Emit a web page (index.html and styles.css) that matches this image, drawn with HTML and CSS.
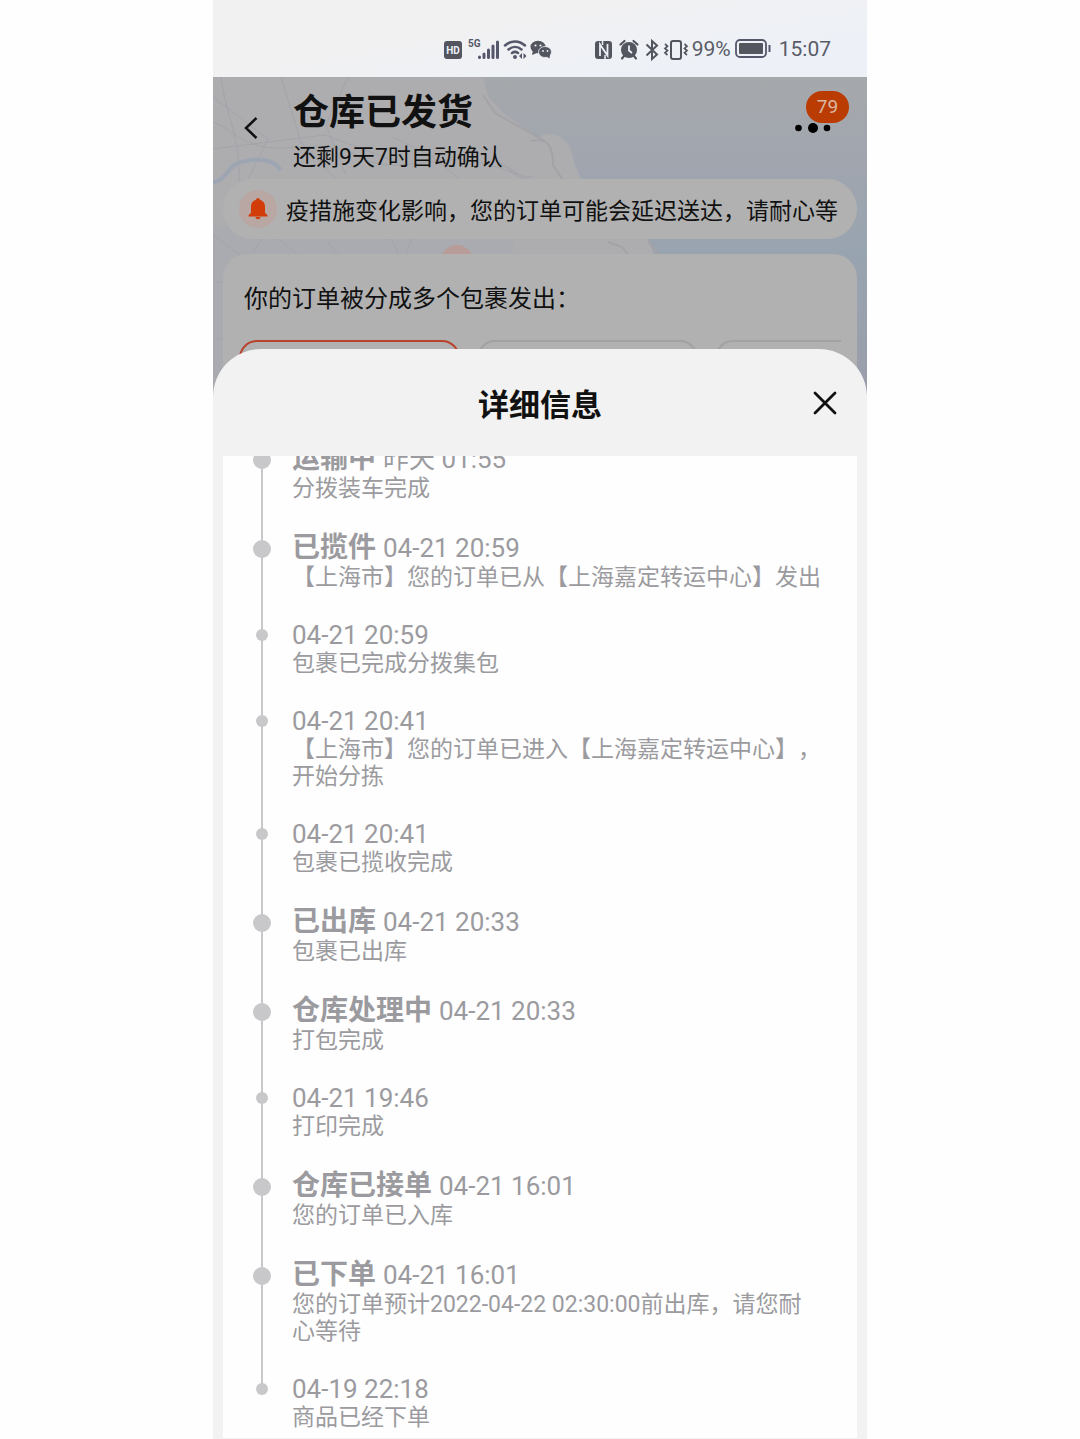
FILE: index.html
```
<!DOCTYPE html>
<html lang="zh-CN">
<head>
  <meta charset="UTF-8">
  <meta name="viewport" content="width=device-width, initial-scale=1.0">
  <title>仓库已发货</title>
  <link rel="stylesheet" href="styles.css">
</head>
<body>
  <div class="phone">
    <!-- Status bar -->
    <div class="status-bar">
      <svg class="status-left" width="110" height="26" viewBox="0 0 110 26" aria-hidden="true">
        <rect x="1" y="5" width="18" height="18" rx="3" fill="#53555f"/>
        <text x="10" y="18" class="hd-text">HD</text>
        <text x="25" y="11" class="net-text">5G</text>
        <g stroke="#55576a" stroke-width="3" stroke-linecap="round">
          <path d="M36.500 21v.5M41 18v3.500M45.500 14v7.500M50 10v11.500M54.500 6v15.500"/>
        </g>
        <g fill="none" stroke="#55576a" stroke-width="2.500" stroke-linecap="round">
          <path d="M62 9.500c6-5.500 14-5.500 20 0M65.500 13.500c4-3.500 9-3.500 13 0M69 17c2-1.500 4-1.500 6 0"/>
        </g>
        <circle cx="72" cy="21" r="2" fill="#55576a"/>
        <path d="M79 17v6l-3-3zM80.500 17v6l3-3z" fill="#55576a"/>
        <!-- chat bubbles -->
        <ellipse cx="95" cy="11" rx="7.500" ry="6.200" fill="#53555f"/>
        <path d="M90 14l-1 5 5-2z" fill="#53555f"/>
        <ellipse cx="102" cy="16" rx="6.500" ry="5.500" fill="#53555f" stroke="#edf0f7" stroke-width=".8"/>
        <path d="M103 20l3.500 2.500.5-4z" fill="#53555f"/>
        <circle cx="92.500" cy="9.500" r="1.100" fill="#edf0f7"/>
        <circle cx="97.500" cy="9.500" r="1.100" fill="#edf0f7"/>
        <circle cx="100" cy="15" r=".9" fill="#edf0f7"/>
        <circle cx="104.500" cy="15" r=".9" fill="#edf0f7"/>
      </svg>
      <svg class="status-right" width="96" height="26" viewBox="0 0 96 26" aria-hidden="true">
        <rect x="2" y="5" width="17" height="18" rx="3" fill="#53555f"/>
        <path d="M7 20V8.500l7.500 11V8" fill="none" stroke="#edf0f7" stroke-width="1.800"/>
        <path d="M9.500 5v4M12 19v4" stroke="#edf0f7" stroke-width="1.500"/>
        <circle cx="36" cy="14" r="8" fill="#53555f"/>
        <path d="M27.500 8.500l4-3.500M44.500 8.500l-4-3.500M31 20l-2 2.500M41 20l2 2.500" stroke="#53555f" stroke-width="2.200" stroke-linecap="round"/>
        <path d="M36 9.500v5l3 2.500" fill="none" stroke="#edf0f7" stroke-width="1.800"/>
        <path d="M53.500 8.500l10.500 10-5 4.500V5l5 4.500-10.500 10" fill="none" stroke="#53555f" stroke-width="2"/>
        <rect x="78" y="5" width="10" height="18" rx="2" fill="none" stroke="#53555f" stroke-width="2"/>
        <path d="M72 8l2.500 2.200-2.500 2.200 2.500 2.200-2.500 2.200 2.500 2.200M91.500 8l2.500 2.200-2.500 2.200 2.500 2.200-2.500 2.200 2.500 2.200" fill="none" stroke="#53555f" stroke-width="1.700"/>
      </svg>
      <span>99%</span>
      <svg class="battery" width="36" height="20" viewBox="0 0 36 20" aria-hidden="true">
        <rect x="1" y="1" width="30" height="17" rx="4" fill="none" stroke="#55576a" stroke-width="1.800"/>
        <rect x="4" y="4" width="24" height="11" rx="1" fill="#53555f"/>
        <path d="M34.500 6v7" stroke="#55576a" stroke-width="2"/>
      </svg>
      <span class="clock">15:07</span>
    </div>

    <!-- Order page behind the sheet -->
    <header class="order">
      <svg class="map" viewBox="0 0 654 318" preserveAspectRatio="none" aria-hidden="true">
        <defs>
          <linearGradient id="sea" x1="0" y1="0" x2="0" y2="1">
            <stop offset="0" stop-color="#a5a9ac"/>
            <stop offset=".25" stop-color="#a1a5ae"/>
            <stop offset=".55" stop-color="#98a4b0"/>
            <stop offset="1" stop-color="#9a9eaa"/>
          </linearGradient>
        </defs>
        <rect width="654" height="318" fill="url(#sea)"/>
        <path d="M0 0h270l5 20 15 16 35 24c16-8 33 0 36 26l8 18 66 58 10 26v130H0z" fill="#adadb0"/>
        <path d="M0 150h300v168H0z" fill="#a9abb1"/>
        <path d="M270 18l12 18 50 28M318 64c18-4 22 6 22 24l10 15M395 165l14 5 8 10M435 164l12 16" fill="none" stroke="#a4a2a6" stroke-width="2"/>
        <path d="M0 105c12 0 16-18 28-20 18-4 30-4 40 8" fill="none" stroke="#9da5b3" stroke-width="4"/>
        <g fill="none" stroke="#a2a4a9">
          <path d="M0 45c20 8 25 20 52 25s60-10 95 10 80-5 118 5 40 15 55 15M68 0l20 65 35 38M135 0l-22 48 20 50M0 20l55 42-20 40M180 60l40 20 30 25M8 0c5 40 20 60 18 105M0 72l112-14 70 26M318 105l-35-22 30 22"/>
          <path d="M0 158l30 22M40 175l15-22 30 25M115 165l12 15h60l-10-20M200 158l-8 22M0 205h10M0 262h10"/>
        </g>
        <circle cx="244" cy="184" r="16" fill="#b89c98"/>
      </svg>
      <nav class="nav">
        <button class="back" type="button" aria-label="返回">
          <svg width="16" height="26" viewBox="0 0 16 26"><path d="M13.500 3L3 13l10.500 10" fill="none" stroke="#111" stroke-width="2.500"/></svg>
        </button>
        <div class="nav-text">
          <h1>仓库已发货</h1>
          <p>还剩9天7时自动确认</p>
        </div>
        <button class="more" type="button" aria-label="更多">
          <svg width="36" height="12" viewBox="0 0 36 12"><circle cx="3.500" cy="6" r="3.300"/><circle cx="18" cy="6" r="5"/><circle cx="32" cy="6" r="3.300"/></svg>
          <span class="badge">79</span>
        </button>
      </nav>
      <div class="notice">
        <span class="bell">
          <svg width="20" height="22" viewBox="0 0 20 22" aria-hidden="true"><path d="M10 0c1 0 1.800.8 1.800 1.800 3.400.8 5.200 3.500 5.200 7v6l2.500 2.500v1.200H.5v-1.200L3 14.800v-6c0-3.500 1.800-6.200 5.200-7C8.200.8 9 0 10 0zM7.500 19h5c0 1.300-1.100 2.200-2.500 2.200s-2.500-.9-2.500-2.200z" fill="#d23c08"/></svg>
        </span>
        <p>疫措施变化影响，您的订单可能会延迟送达，请耐心等</p>
      </div>
      <section class="packages">
        <h2>你的订单被分成多个包裹发出：</h2>
        <div class="tabs">
          <button class="tab active" type="button" aria-label="包裹1"></button>
          <button class="tab" type="button" aria-label="包裹2"></button>
          <button class="tab" type="button" aria-label="包裹3"></button>
        </div>
      </section>
    </header>

    <!-- Detail sheet -->
    <main class="sheet">
      <div class="sheet-head">
        <h2>详细信息</h2>
        <button class="close" type="button" aria-label="关闭">
          <svg width="24" height="24" viewBox="0 0 24 24"><path d="M2 2l20 20M22 2L2 22" stroke="#111" stroke-width="2.800" stroke-linecap="round"/></svg>
        </button>
      </div>
      <div class="sheet-body">
        <ol class="timeline">
          <li class="step major">
            <span class="rail"></span>
            <div class="info">
              <h3>运输中 <time>昨天 01:55</time></h3>
              <p>分拨装车完成</p>
            </div>
          </li>
          <li class="step major">
            <span class="rail"></span>
            <div class="info">
              <h3>已揽件 <time>04-21 20:59</time></h3>
              <p>【上海市】您的订单已从【上海嘉定转运中心】发出</p>
            </div>
          </li>
          <li class="step">
            <span class="rail"></span>
            <div class="info">
              <h3><time>04-21 20:59</time></h3>
              <p>包裹已完成分拨集包</p>
            </div>
          </li>
          <li class="step">
            <span class="rail"></span>
            <div class="info">
              <h3><time>04-21 20:41</time></h3>
              <p>【上海市】您的订单已进入【上海嘉定转运中心】，开始分拣</p>
            </div>
          </li>
          <li class="step">
            <span class="rail"></span>
            <div class="info">
              <h3><time>04-21 20:41</time></h3>
              <p>包裹已揽收完成</p>
            </div>
          </li>
          <li class="step major">
            <span class="rail"></span>
            <div class="info">
              <h3>已出库 <time>04-21 20:33</time></h3>
              <p>包裹已出库</p>
            </div>
          </li>
          <li class="step major">
            <span class="rail"></span>
            <div class="info">
              <h3>仓库处理中 <time>04-21 20:33</time></h3>
              <p>打包完成</p>
            </div>
          </li>
          <li class="step">
            <span class="rail"></span>
            <div class="info">
              <h3><time>04-21 19:46</time></h3>
              <p>打印完成</p>
            </div>
          </li>
          <li class="step major">
            <span class="rail"></span>
            <div class="info">
              <h3>仓库已接单 <time>04-21 16:01</time></h3>
              <p>您的订单已入库</p>
            </div>
          </li>
          <li class="step major">
            <span class="rail"></span>
            <div class="info">
              <h3>已下单 <time>04-21 16:01</time></h3>
              <p>您的订单预计2022-04-22 02:30:00前出库，请您耐心等待</p>
            </div>
          </li>
          <li class="step">
            <span class="rail"></span>
            <div class="info">
              <h3><time>04-19 22:18</time></h3>
              <p>商品已经下单</p>
            </div>
          </li>
        </ol>
      </div>
    </main>
  </div>
</body>
</html>
```

FILE: styles.css
```
* {
  box-sizing: border-box;
}
body {
  margin: 0;
  background-color: #fefefe;
  font-family: Roboto, "Noto Sans CJK SC", sans-serif;
  color: #111;
}
h1, h2, h3, p, ol {
  margin: 0;
  padding: 0;
}
button {
  padding: 0;
  border: none;
  background: none;
  font: inherit;
  cursor: pointer;
}
svg {
  display: block;
}
.phone {
  max-width: 654px;
  margin: 0 auto;
  overflow: hidden;
}

/* status bar */
.status-bar {
  display: flex;
  align-items: center;
  justify-content: flex-end;
  height: 77px;
  padding: 20px 36px 0 0;
  background: linear-gradient(170deg, #f2f1f1 30%, #edf1f7 80%);
  color: #5a5c68;
  font-size: 21px;
}
.status-left {
  margin-right: 40px;
}
.status-right {
  margin-right: 3px;
}
.battery {
  margin: 0 8px 0 4px;
}
.hd-text {
  font-size: 10px;
  font-weight: bold;
  fill: #edf0f7;
  text-anchor: middle;
}
.net-text {
  font-size: 10px;
  font-weight: bold;
  fill: #55576a;
}

/* order page */
.order {
  position: relative;
  height: 318px;
  overflow: hidden;
  padding: 0 10px;
}
.map {
  position: absolute;
  top: 0;
  left: 0;
  width: 100%;
  height: 100%;
}
.nav {
  position: relative;
  display: flex;
  align-items: center;
  height: 102px;
  padding: 0 26px 0 20px;
}
.nav-text {
  flex: 1;
  margin-left: 34px;
  padding-top: 6px;
}
.nav h1 {
  font-size: 36px;
  line-height: 46px;
}
.nav p {
  margin-top: 7px;
  font-size: 23px;
  line-height: 30px;
}
.more {
  position: relative;
}
.badge {
  position: absolute;
  left: 11px;
  bottom: 11px;
  width: 43px;
  border-radius: 16px;
  background-color: #ba3c02;
  color: #d9b9a4;
  font-size: 19px;
  line-height: 32px;
}
.notice {
  position: relative;
  display: flex;
  align-items: center;
  height: 60px;
  padding: 0 16px;
  border-radius: 30px;
  background-color: #b1b1b1;
  font-size: 23px;
  white-space: nowrap;
}
.bell {
  display: flex;
  align-items: center;
  justify-content: center;
  width: 38px;
  height: 38px;
  margin-right: 9px;
  border-radius: 50%;
  background-color: #b8a7a3;
}
.packages {
  position: relative;
  height: 200px;
  margin-top: 15px;
  padding: 27px 16px 0;
  border-radius: 24px;
  background-color: #b1b1b1;
}
.packages h2 {
  padding-left: 5px;
  font-size: 24px;
  font-weight: normal;
  line-height: 36px;
}
.tabs {
  display: flex;
  gap: 17px;
  margin-top: 23px;
  overflow: hidden;
}
.tab {
  flex: 0 0 221px;
  height: 80px;
  border: 2px solid #a2a2a3;
  border-radius: 18px;
}
.tab.active {
  border-color: #b8452b;
}

/* detail sheet */
.sheet {
  position: relative;
  margin-top: -46px;
  padding: 0 10px 1px;
  border-radius: 48px 48px 0 0;
  background-color: #f2f2f2;
}
.sheet-head {
  display: grid;
  grid-template-columns: 1fr auto 1fr;
  align-items: center;
  height: 107px;
  padding: 0 20px;
}
.sheet-head h2 {
  grid-column: 2;
  padding-top: 6px;
  font-size: 31px;
  line-height: 46px;
}
.close {
  justify-self: end;
}
.sheet-body {
  overflow: hidden;
  background-color: #fefefe;
}

/* the list is already scrolled a little */
.timeline {
  margin-top: -13px;
  padding: 0 35px 7px 30px;
  list-style: none;
}
.step {
  display: flex;
}
.rail {
  flex: none;
  width: 18px;
  padding-top: 8px;
  background: linear-gradient(#c8c8ca, #c8c8ca) center top / 2px 100% no-repeat;
}
.rail::before {
  content: "";
  display: block;
  width: 12px;
  height: 12px;
  margin: 0 auto;
  border-radius: 50%;
  background-color: #c8c8ca;
}
.major .rail::before {
  width: 18px;
  height: 18px;
}
.step:last-child .rail {
  background-size: 2px 14px;
}
.info {
  flex: 1;
  margin-left: 21px;
  padding-bottom: 30px;
  color: #9b9b9f;
  text-spacing-trim: space-all;
}
.step:last-child .info {
  padding-bottom: 0;
}
.info h3 {
  font-size: 26px;
  line-height: 29px;
}
.major h3 {
  font-size: 28px;
  line-height: 32px;
}
.info time {
  font-size: 26px;
  font-weight: normal;
}
.major time {
  line-height: 20px;
}
.info p {
  font-size: 23px;
  line-height: 27px;
}
```
